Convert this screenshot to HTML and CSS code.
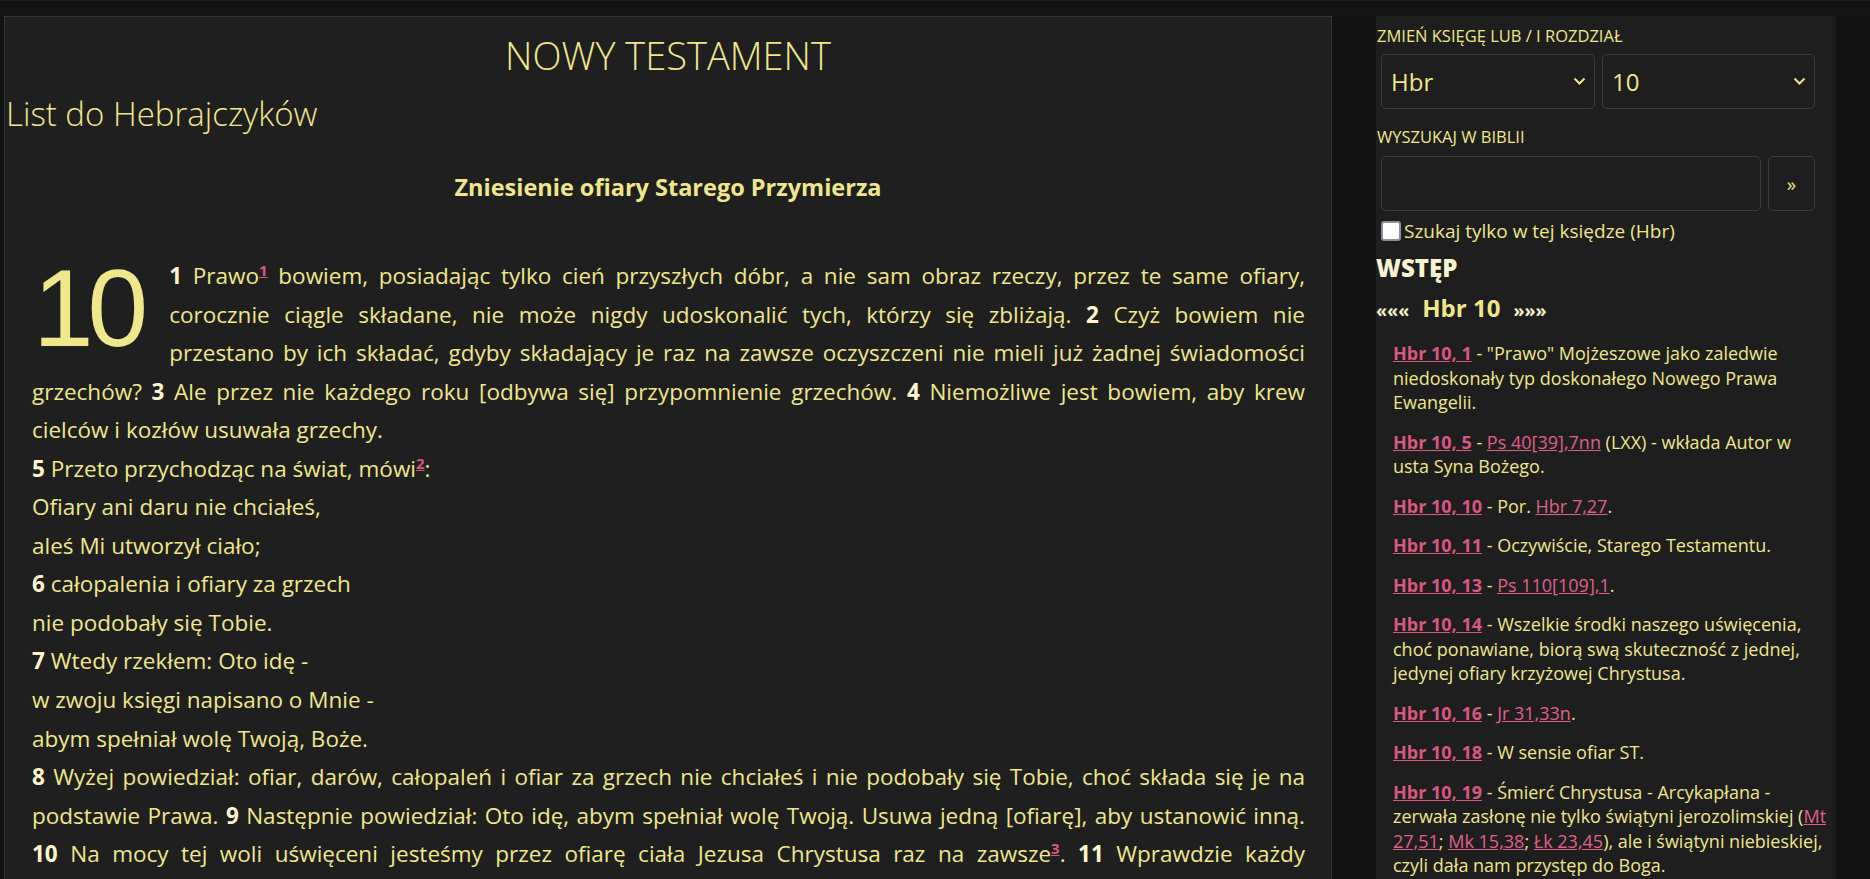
FILE: index.html
```html
<!DOCTYPE html>
<html lang="pl">
<head>
<meta charset="utf-8">
<title>List do Hebrajczyków 10</title>
<link rel="stylesheet" href="styles.css">
</head>
<body>
<div class="topbar"></div>
<div class="layout">
  <main class="reader">
    <h1 class="testament">NOWY TESTAMENT</h1>
    <h2 class="book">List do Hebrajczyków</h2>
    <h3 class="pericope">Zniesienie ofiary Starego Przymierza</h3>
    <div class="chapter">
      <span class="dropcap">10</span>
      <div class="verses">
        <span class="ln"><b class="vn">1</b> Prawo<a class="fn" href="#">1</a> bowiem, posiadając tylko cień przyszłych dóbr, a nie sam obraz rzeczy, przez te same ofiary,</span>
        <span class="ln">corocznie ciągle składane, nie może nigdy udoskonalić tych, którzy się zbliżają. <b class="vn">2</b> Czyż bowiem nie</span>
        <span class="ln tight">przestano by ich składać, gdyby składający je raz na zawsze oczyszczeni nie mieli już żadnej świadomości</span>
        <span class="ln tight">grzechów? <b class="vn">3</b> Ale przez nie każdego roku [odbywa się] przypomnienie grzechów. <b class="vn">4</b> Niemożliwe jest bowiem, aby krew</span>
        <span class="ln last">cielców i kozłów usuwała grzechy.</span>
        <span class="ln last"><b class="vn">5</b> Przeto przychodząc na świat, mówi<a class="fn" href="#">2</a>:</span>
        <span class="ln last">Ofiary ani daru nie chciałeś,</span>
        <span class="ln last">aleś Mi utworzył ciało;</span>
        <span class="ln last"><b class="vn">6</b> całopalenia i ofiary za grzech</span>
        <span class="ln last">nie podobały się Tobie.</span>
        <span class="ln last"><b class="vn">7</b> Wtedy rzekłem: Oto idę -</span>
        <span class="ln last">w zwoju księgi napisano o Mnie -</span>
        <span class="ln last">abym spełniał wolę Twoją, Boże.</span>
        <span class="ln"><b class="vn">8</b> Wyżej powiedział: ofiar, darów, całopaleń i ofiar za grzech nie chciałeś i nie podobały się Tobie, choć składa się je na</span>
        <span class="ln">podstawie Prawa. <b class="vn">9</b> Następnie powiedział: Oto idę, abym spełniał wolę Twoją. Usuwa jedną [ofiarę], aby ustanowić inną.</span>
        <span class="ln"><b class="vn">10</b> Na mocy tej woli uświęceni jesteśmy przez ofiarę ciała Jezusa Chrystusa raz na zawsze<a class="fn" href="#">3</a>. <b class="vn">11</b> Wprawdzie każdy</span>
        <span class="ln">kapłan<a class="fn" href="#">4</a> staje codziennie do wykonywania swej służby, składając wiele razy te same ofiary, które żadną</span>
        <span class="ln last">miarą nie mogą zgładzić grzechów.</span>
      </div>
    </div>
  </main>

  <aside class="sidebar">
    <div class="label">ZMIEŃ KSIĘGĘ LUB / I ROZDZIAŁ</div>
    <div class="select-row">
      <div class="select"><span>Hbr</span><svg class="chev" width="13" height="9" viewBox="0 0 13 9"><path d="M1.5 1.5 L6.5 6.5 L11.5 1.5" fill="none" stroke="#f0e68c" stroke-width="2"/></svg></div>
      <div class="select"><span>10</span><svg class="chev" width="13" height="9" viewBox="0 0 13 9"><path d="M1.5 1.5 L6.5 6.5 L11.5 1.5" fill="none" stroke="#f0e68c" stroke-width="2"/></svg></div>
    </div>
    <div class="label label-search">WYSZUKAJ W BIBLII</div>
    <div class="search-row">
      <div class="search-input"></div>
      <div class="search-btn">»</div>
    </div>
    <label class="check-row"><span class="checkbox"></span>Szukaj tylko w tej księdze (Hbr)</label>
    <div class="intro">WSTĘP</div>
    <div class="chap-nav"><span class="arrows">«««</span><span class="cur">Hbr 10</span><span class="arrows">»»»</span></div>
    <ul class="notes">
      <li><a class="ref" href="#">Hbr 10, 1</a> - "Prawo" Mojżeszowe jako zaledwie niedoskonały typ doskonałego Nowego Prawa Ewangelii.</li>
      <li><a class="ref" href="#">Hbr 10, 5</a> - <a class="xref" href="#">Ps 40[39],7nn</a> (LXX) - wkłada Autor w usta Syna Bożego.</li>
      <li><a class="ref" href="#">Hbr 10, 10</a> - Por. <a class="xref" href="#">Hbr 7,27</a>.</li>
      <li><a class="ref" href="#">Hbr 10, 11</a> - Oczywiście, Starego Testamentu.</li>
      <li><a class="ref" href="#">Hbr 10, 13</a> - <a class="xref" href="#">Ps 110[109],1</a>.</li>
      <li><a class="ref" href="#">Hbr 10, 14</a> - Wszelkie środki naszego uświęcenia, choć ponawiane, biorą swą skuteczność z jednej, jedynej ofiary krzyżowej Chrystusa.</li>
      <li><a class="ref" href="#">Hbr 10, 16</a> - <a class="xref" href="#">Jr 31,33n</a>.</li>
      <li><a class="ref" href="#">Hbr 10, 18</a> - W sensie ofiar ST.</li>
      <li><a class="ref" href="#">Hbr 10, 19</a> - Śmierć Chrystusa - Arcykapłana - zerwała zasłonę nie tylko świątyni jerozolimskiej (<a class="xref" href="#">Mt 27,51</a>; <a class="xref" href="#">Mk 15,38</a>; <a class="xref" href="#">Łk 23,45</a>), ale i świątyni niebieskiej, czyli dała nam przystęp do Boga.</li>
    </ul>
  </aside>
</div>
</body>
</html>
```

FILE: styles.css
```css
* { box-sizing: border-box; }
html, body {
  margin: 0;
  padding: 0;
  background: #121212;
  color: #f0e68c;
  font-family: "Open Sans", "Noto Sans", sans-serif;
  overflow: hidden;
}
.topbar {
  height: 16px;
  background: #131313;
  border-top: 1px solid #1c1c1c;
}
.layout {
  display: flex;
  align-items: flex-start;
  padding-left: 4px;
  gap: 44px;
}
.reader {
  width: 1328px;
  min-height: 900px;
  background: #1f1f1f;
  border: 1px solid #363636;
  border-bottom: none;
}
.testament {
  margin: 0;
  padding-top: 10px;
  text-align: center;
  font-weight: 300;
  font-size: 38px;
  line-height: 56px;
}
.book {
  margin: 9px 0 0;
  padding-left: 1px;
  font-weight: 300;
  font-size: 33px;
  line-height: 44px;
}
.pericope {
  margin: 37px 0 0;
  text-align: center;
  font-weight: 700;
  font-size: 23.5px;
  line-height: 28px;
}
.chapter {
  padding: 56px 26px 0 27px;
}
.dropcap {
  float: left;
  font-family: "Liberation Sans", sans-serif;
  font-weight: 400;
  font-size: 109px;
  line-height: 98px;
  margin: 2px 27px 0 0;
  padding-left: 1px;
  letter-spacing: -6px;
}
.verses {
  font-size: 22.5px;
  line-height: 38.55px;
}
.ln {
  display: block;
  white-space: nowrap;
  text-align: justify;
  text-align-last: justify;
}
.ln.tight {
  word-spacing: -1.5px;
}
.ln.last {
  text-align-last: left;
}
.vn {
  font-weight: 700;
  color: #fff6d0;
}
.fn {
  color: #d9587f;
  font-weight: 700;
  font-size: 15px;
  vertical-align: 8px;
  line-height: 0;
  text-decoration: underline;
}
.sidebar {
  width: 460px;
  min-height: 900px;
  background: #1e1e1e;
  padding: 9px 0 0 0;
}
.label {
  font-size: 16.5px;
  line-height: 22px;
  padding-left: 1px;
}
.select-row {
  display: flex;
  gap: 7px;
  margin: 7px 0 0 5px;
}
.select {
  width: 214px;
  height: 55px;
  border: 1px solid #3b3b3b;
  border-radius: 5px;
  display: flex;
  align-items: center;
  justify-content: space-between;
  padding: 0 8px 0 9px;
  font-size: 24px;
}
.select + .select { width: 213px; }
.label-search {
  margin-top: 17px;
}
.search-row {
  display: flex;
  gap: 7px;
  margin: 8px 0 0 5px;
}
.search-input {
  width: 380px;
  height: 55px;
  border: 1px solid #3b3b3b;
  border-radius: 5px;
}
.search-btn {
  width: 47px;
  height: 55px;
  border: 1px solid #3b3b3b;
  border-radius: 5px;
  display: flex;
  align-items: center;
  justify-content: center;
  font-size: 19px;
}
.check-row {
  display: flex;
  align-items: center;
  gap: 3px;
  margin: 7px 0 0 5px;
  font-size: 19px;
  line-height: 26px;
}
.checkbox {
  width: 20px;
  height: 20px;
  background: #fff;
  border: 2px solid #8c8c9c;
  border-radius: 3px;
}
.intro {
  margin-top: 9px;
  font-weight: 800;
  font-size: 24px;
  line-height: 30px;
  color: #f7f2cf;
}
.chap-nav {
  display: flex;
  align-items: baseline;
  gap: 13px;
  margin-top: 10px;
  line-height: 30px;
}
.chap-nav .arrows {
  color: #f7f2cf;
  font-weight: 700;
  font-size: 18px;
}
.chap-nav .cur {
  font-weight: 700;
  font-size: 24px;
}
.notes {
  list-style: none;
  margin: 16px 0 0;
  padding: 0 8px 0 17px;
  font-size: 18px;
  line-height: 24.5px;
}
.notes li {
  margin-bottom: 15px;
}
.ref {
  color: #d9587f;
  font-weight: 700;
  text-decoration: underline;
}
.xref {
  color: #e0608a;
  text-decoration: underline;
}
```
